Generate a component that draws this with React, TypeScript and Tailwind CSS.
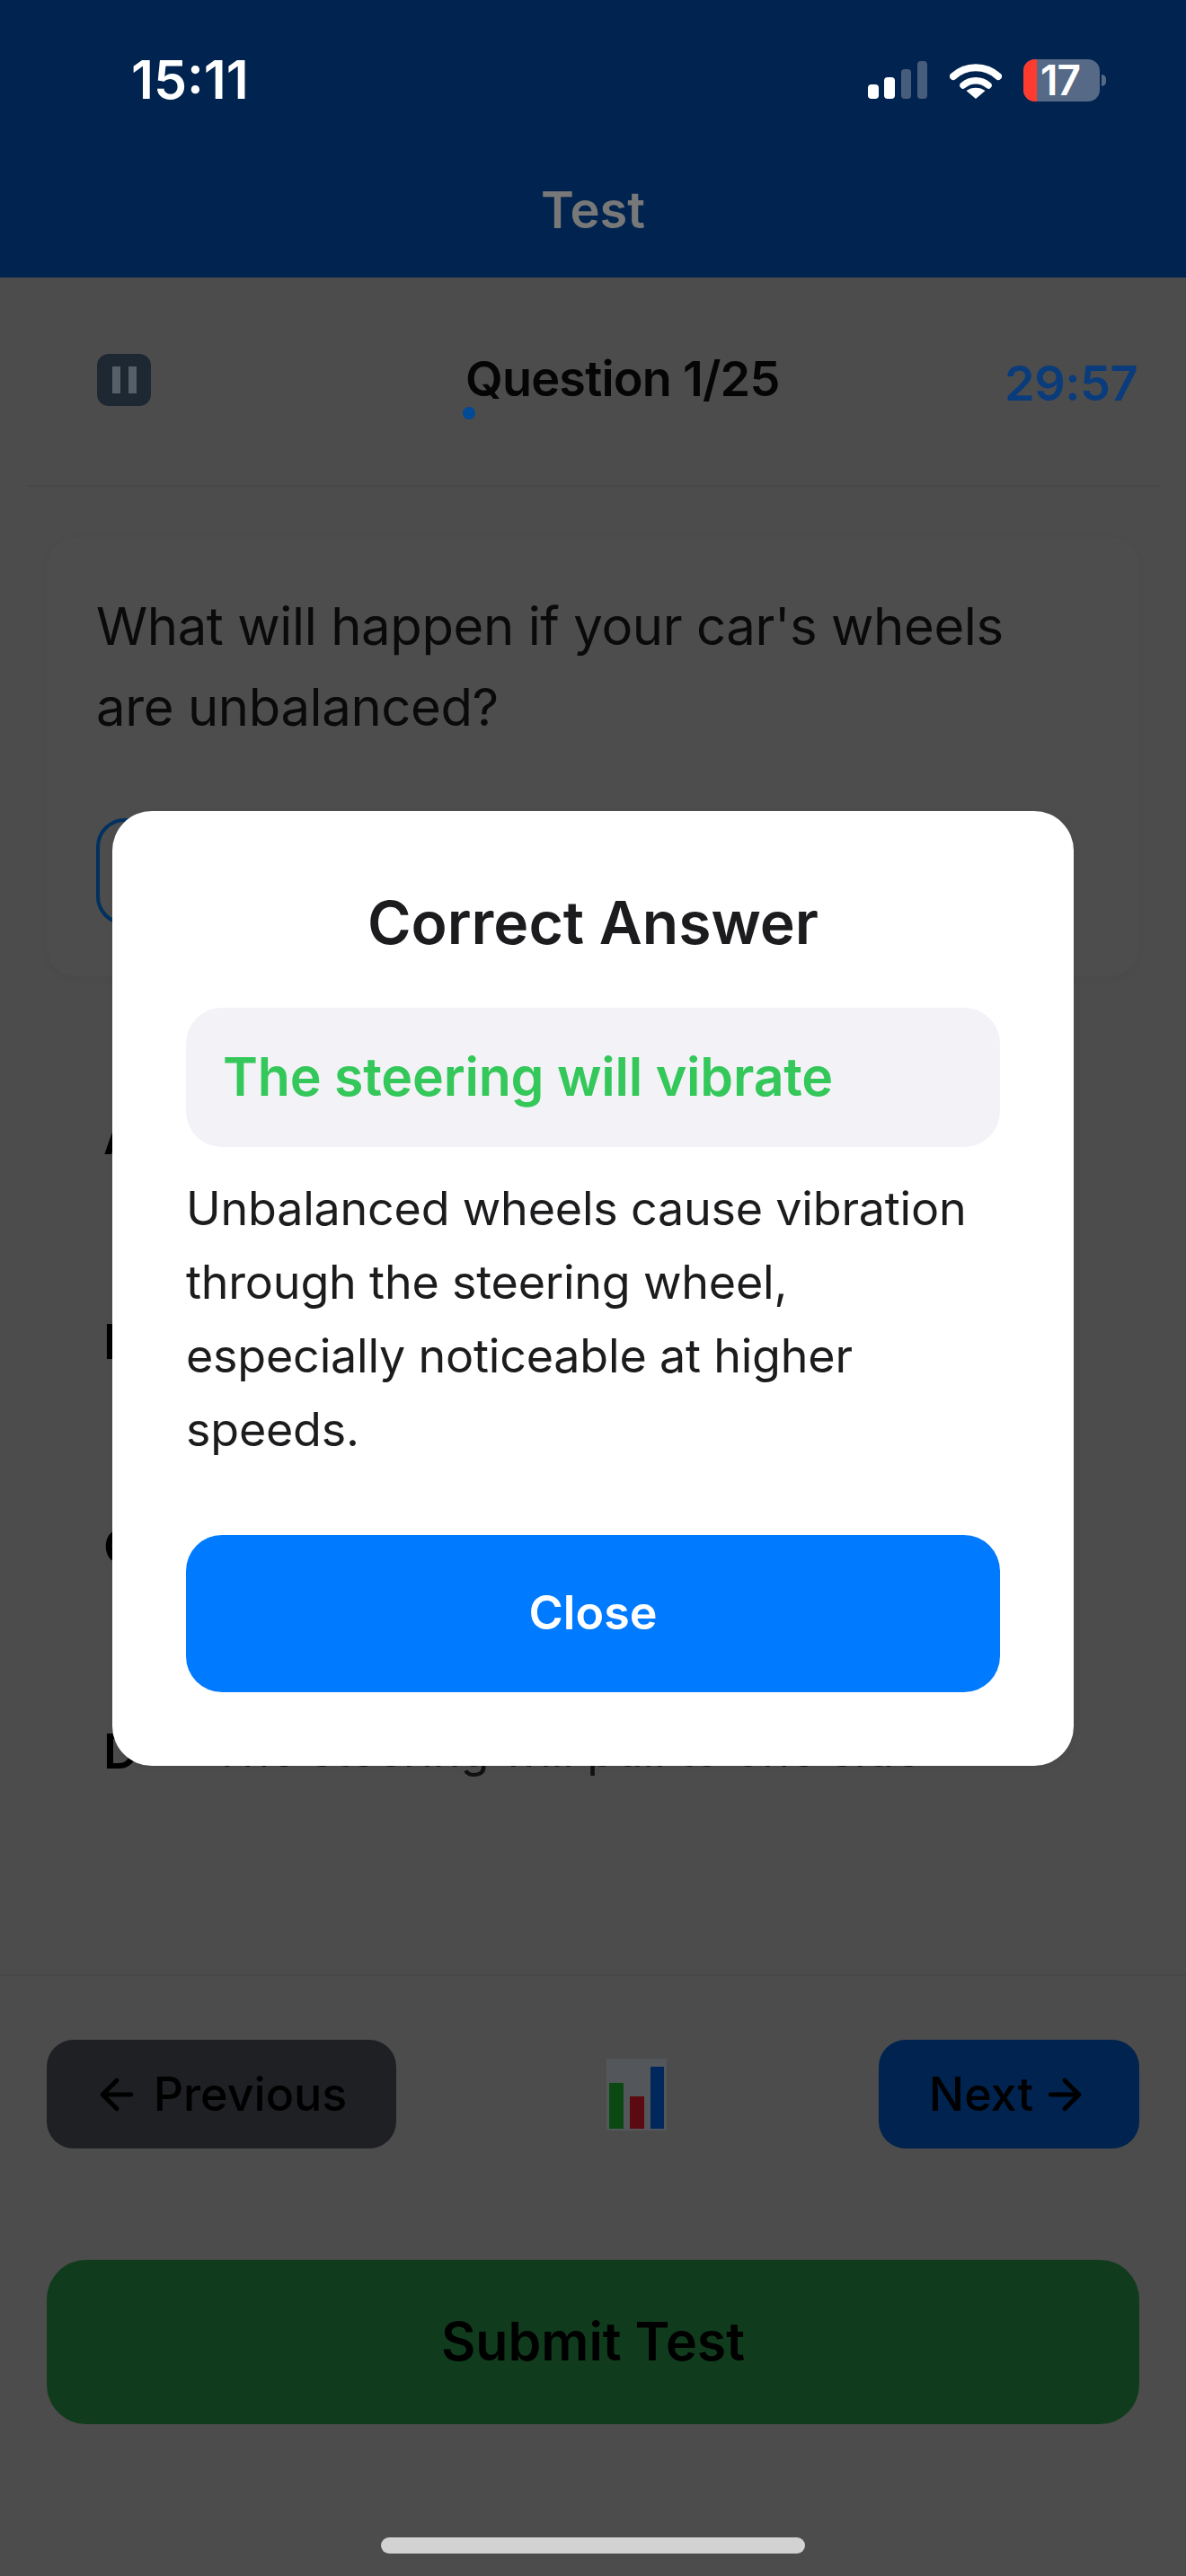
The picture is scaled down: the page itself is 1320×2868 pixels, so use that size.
import { ArrowLeft, ArrowRight } from "lucide-react";

const options = [
  { letter: "A", text: "" },
  { letter: "B", text: "" },
  { letter: "C", text: "" },
  { letter: "D", text: "The steering will pull to one side" },
];

const SignalIcon = () => (
  <svg width="66" height="42" viewBox="0 0 66 42" className="block">
    <rect x="0" y="26" width="12" height="16" rx="4" fill="#ffffff" />
    <rect x="18" y="18" width="12" height="24" rx="4" fill="#ffffff" />
    <rect x="37" y="9" width="11" height="33" rx="4" fill="#475d7c" />
    <rect x="55" y="0" width="11" height="42" rx="4" fill="#475d7c" />
  </svg>
);

const WifiIcon = () => (
  <svg width="58" height="42" viewBox="0 0 58 42" className="block" fill="none">
    <path d="M4 17 C18 4 40 4 54 17" stroke="#ffffff" strokeWidth="8" strokeLinecap="round" />
    <path d="M15 27 C23 20 35 20 43 27" stroke="#ffffff" strokeWidth="7.5" strokeLinecap="round" />
    <path d="M29 42 L18.5 33 C24 28.5 34 28.5 39.5 33 Z" fill="#ffffff" />
  </svg>
);

const BatteryIcon = () => (
  <div className="flex items-center">
    <div className="flex h-[47px] w-[85px] items-center rounded-[13px] bg-[#566a87]">
      <div className="h-full w-[15px] rounded-l-[13px] bg-[#ff3b30]" />
      <span className="ml-[4px] text-[46px] leading-[47px] font-semibold tracking-[-1px] text-white">17</span>
    </div>
    <div className="ml-[2px] h-[13px] w-[5px] rounded-r-full bg-[#566a87]" />
  </div>
);

const PauseIcon = () => (
  <div className="flex h-[58px] w-[60px] items-center justify-center gap-[9px] rounded-[13px] bg-[#1e2833]">
    <div className="h-[30px] w-[9px] bg-[#566068]" />
    <div className="h-[30px] w-[9px] bg-[#566068]" />
  </div>
);

const ChartIcon = () => (
  <svg width="67" height="80" viewBox="0 0 67 80" className="block">
    <rect x="0" y="0" width="67" height="80" fill="#53565a" />
    <rect x="3" y="27" width="16" height="51" fill="#0a4a12" />
    <rect x="26" y="42" width="16" height="36" fill="#5a0a10" />
    <rect x="49" y="9" width="15" height="69" fill="#00285c" />
  </svg>
);

export default function App() {
  return (
    <div
      className="relative flex h-[2868px] w-[1320px] flex-col overflow-hidden bg-[#4c4c4c]"
      style={{ fontFamily: "Inter, 'Noto Sans', sans-serif" }}
    >
      {/* Header */}
      <header className="h-[309px] bg-[#00244f]">
        <div className="flex items-center justify-between pt-[65px] pr-[89px] pl-[146px]">
          <span className="text-[59px] leading-[48px] font-semibold text-white">15:11</span>
          <div className="flex items-center">
            <SignalIcon />
            <div className="ml-[25px]">
              <WifiIcon />
            </div>
            <div className="ml-[24px]">
              <BatteryIcon />
            </div>
          </div>
        </div>
        <h1 className="mt-[87px] text-center text-[56px] leading-[68px] font-semibold text-[#787878]">Test</h1>
      </header>

      {/* Toolbar */}
      <div className="mx-[30px] flex h-[233px] items-start border-b-2 border-[#474747] pt-[85px] pr-[24px] pl-[78px]">
        <PauseIcon />
        <div className="ml-[350px]">
          <div className="text-[54px] leading-[56px] font-semibold tracking-[-0.8px] text-[#050505]">Question 1/25</div>
          <div className="mt-[3px] -ml-[3px] h-[14px] w-[14px] rounded-full bg-[#004a96]" />
        </div>
        <div className="mt-[5px] ml-auto text-[54px] leading-[56px] font-semibold tracking-[-0.5px] text-[#0a3c7c]">
          29:57
        </div>
      </div>

      {/* Question */}
      <main className="flex-1 px-[52px] pt-[56px]">
        <section className="rounded-[32px] bg-[#4d4d4d] px-[55px] pt-[54px] pb-[57px] shadow-[0_2px_10px_rgba(0,0,0,0.04)]">
          <p className="text-[58px] leading-[90px] tracking-[-0.4px] text-[#0a0a0a]">
            What will happen if your car's wheels are unbalanced?
          </p>
          <div className="mt-[79px] h-[119px] w-[1000px] rounded-[32px] border-[4px] border-[#00315f]" />
        </section>

        <div className="mt-[64px] flex flex-col">
          {options.map((option) => (
            <div key={option.letter} className="flex h-[228px] items-center pl-[63px]">
              <span className="w-[121px] text-[54px] font-semibold text-black">{option.letter}</span>
              <span className="text-[52px] tracking-[-0.1px] text-[#111111]">{option.text}</span>
            </div>
          ))}
        </div>
      </main>

      {/* Footer */}
      <footer className="h-[670px] border-t-2 border-[#474747] px-[52px] pt-[71px]">
        <div className="flex items-center">
          <button className="flex h-[121px] w-[389px] items-center justify-center gap-[14px] rounded-[30px] bg-[#1f2024] pr-[4px] text-[52px] font-medium text-black">
            <ArrowLeft size={54} strokeWidth={2.2} />
            Previous
          </button>
          <div className="ml-[234px]">
            <ChartIcon />
          </div>
          <button className="ml-auto flex h-[121px] w-[290px] items-center justify-center gap-[8px] rounded-[30px] bg-[#00234f] text-[52px] font-medium text-black">
            Next
            <ArrowRight size={54} strokeWidth={2.2} />
          </button>
        </div>
        <button className="mt-[124px] block h-[183px] w-full rounded-[44px] bg-[#103c1d] text-[59px] font-semibold text-black">
          Submit Test
        </button>
        <div className="mx-auto mt-[126px] h-[18px] w-[472px] rounded-full bg-[#d2d2d2]" />
      </footer>

      {/* Answer dialog */}
      <div className="absolute inset-0 flex items-center justify-center">
        <div className="w-[1070px] rounded-[44px] bg-white px-[82px] pt-[86px] pb-[82px] shadow-[0_2px_10px_rgba(0,0,0,0.05)]">
          <h2 className="text-center text-[66px] leading-[76px] font-semibold text-[#1c1c1e]">Correct Answer</h2>
          <div className="mt-[57px] flex h-[155px] items-center rounded-[40px] bg-[#f2f2f7] px-[41px]">
            <span className="text-[59px] font-semibold tracking-[-0.2px] text-[#34c759]">The steering will vibrate</span>
          </div>
          <p className="mt-[28px] text-[52px] leading-[82px] tracking-[-0.2px] text-[#1c1c1e]">
            Unbalanced wheels cause vibration through the steering wheel, especially noticeable at higher speeds.
          </p>
          <button className="mt-[76px] h-[175px] w-full rounded-[40px] bg-[#007aff] text-[52px] font-semibold text-white">
            Close
          </button>
        </div>
      </div>
    </div>
  );
}
